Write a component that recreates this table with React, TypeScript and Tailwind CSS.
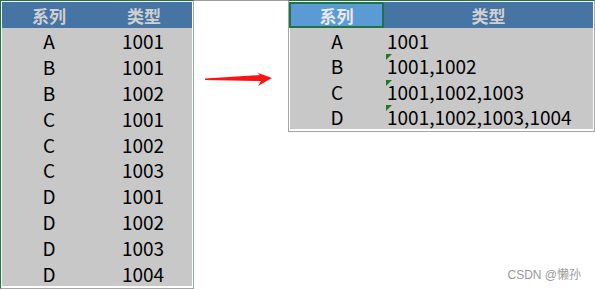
import React from 'react';

const leftRows = [
    ['A', '1001'], ['B', '1001'], ['B', '1002'], ['C', '1001'], ['C', '1002'],
    ['C', '1003'], ['D', '1001'], ['D', '1002'], ['D', '1003'], ['D', '1004'],
];

const rightRows = [
    ['A', '1001', false],
    ['B', '1001,1002', true],
    ['C', '1001,1002,1003', true],
    ['D', '1001,1002,1003,1004', true],
] as const;

const font = "font-['Noto_Sans_CJK_SC','Microsoft_YaHei',sans-serif]";

const Flag: React.FC = () => (
    <svg width="6" height="6" viewBox="0 0 6 6" className="absolute left-[2px] top-[1px]">
        <polygon points="0,0 6,0 0,6" fill="#1f7a1f" />
    </svg>
);

const App: React.FC = () => {
    return (
        <div className={`relative w-[595px] h-[290px] bg-white flex items-start overflow-hidden ${font}`}>
            {/* left table */}
            <div className="w-[194px] h-[289px] border-l border-t border-l-[#217346] border-t-[#217346] border-r border-b border-r-[#9aa6b2] border-b-[#a6a6a6] p-px">
                <div className="h-[26px] bg-[#4674a4] flex text-[17px] leading-none font-bold text-[#d0d0d0]">
                    <div className="w-[94px] flex items-center justify-center">系列</div>
                    <div className="flex-1 flex items-center justify-center">类型</div>
                </div>
                <div className="h-[258px] bg-[#c8c8c8] flex flex-col text-[19px] leading-none text-black">
                    {leftRows.map(([s, t], i) => (
                        <div key={i} className="flex-1 min-h-0 flex items-center">
                            <div className="w-[94px] text-center">{s}</div>
                            <div className="flex-1 text-center pr-[2px]">{t}</div>
                        </div>
                    ))}
                </div>
            </div>

            {/* arrow */}
            <div className="w-[94px] h-[290px] border-t border-[#9e9e9e]">
                <svg width="94" height="24" viewBox="0 0 94 24" className="mt-[67px]">
                    <polygon points="11,10.6 66,7 63,4.5 78,10 64,18 67,13 11,12.1" fill="#f81414" />
                </svg>
            </div>

            {/* right table */}
            <div className="w-[307px] h-[132px] border-t border-[#217346] border-l border-l-[#a6a6a6] border-r border-r-[#a6a6a6] border-b border-b-[#a6a6a6] pt-px pr-px pb-px">
                <div className="h-[26px] bg-[#4674a4] flex text-[17px] leading-none font-bold text-[#d0d0d0]">
                    <div className="w-[95px] border-2 border-[#217346] bg-[#5b9bd5] text-[#eaeaea] flex items-center justify-center">系列</div>
                    <div className="flex-1 flex items-center justify-center">类型</div>
                </div>
                <div className="h-[101px] ml-px bg-[#c8c8c8] flex flex-col text-[19px] leading-none text-black">
                    {rightRows.map(([s, t, flag], i) => (
                        <div key={i} className="flex-1 min-h-0 flex items-center">
                            <div className="w-[94px] text-center">{s}</div>
                            <div className="relative flex-1 self-stretch flex items-center pl-[3px]">
                                {flag && <Flag />}
                                {t}
                            </div>
                        </div>
                    ))}
                </div>
            </div>

            <div className="absolute right-[14px] bottom-[9px] text-[12px] leading-none text-[#9a9a9a] font-['Liberation_Sans','Noto_Sans_CJK_SC',sans-serif]">
                CSDN @懒孙
            </div>
        </div>
    );
};

export default App;
